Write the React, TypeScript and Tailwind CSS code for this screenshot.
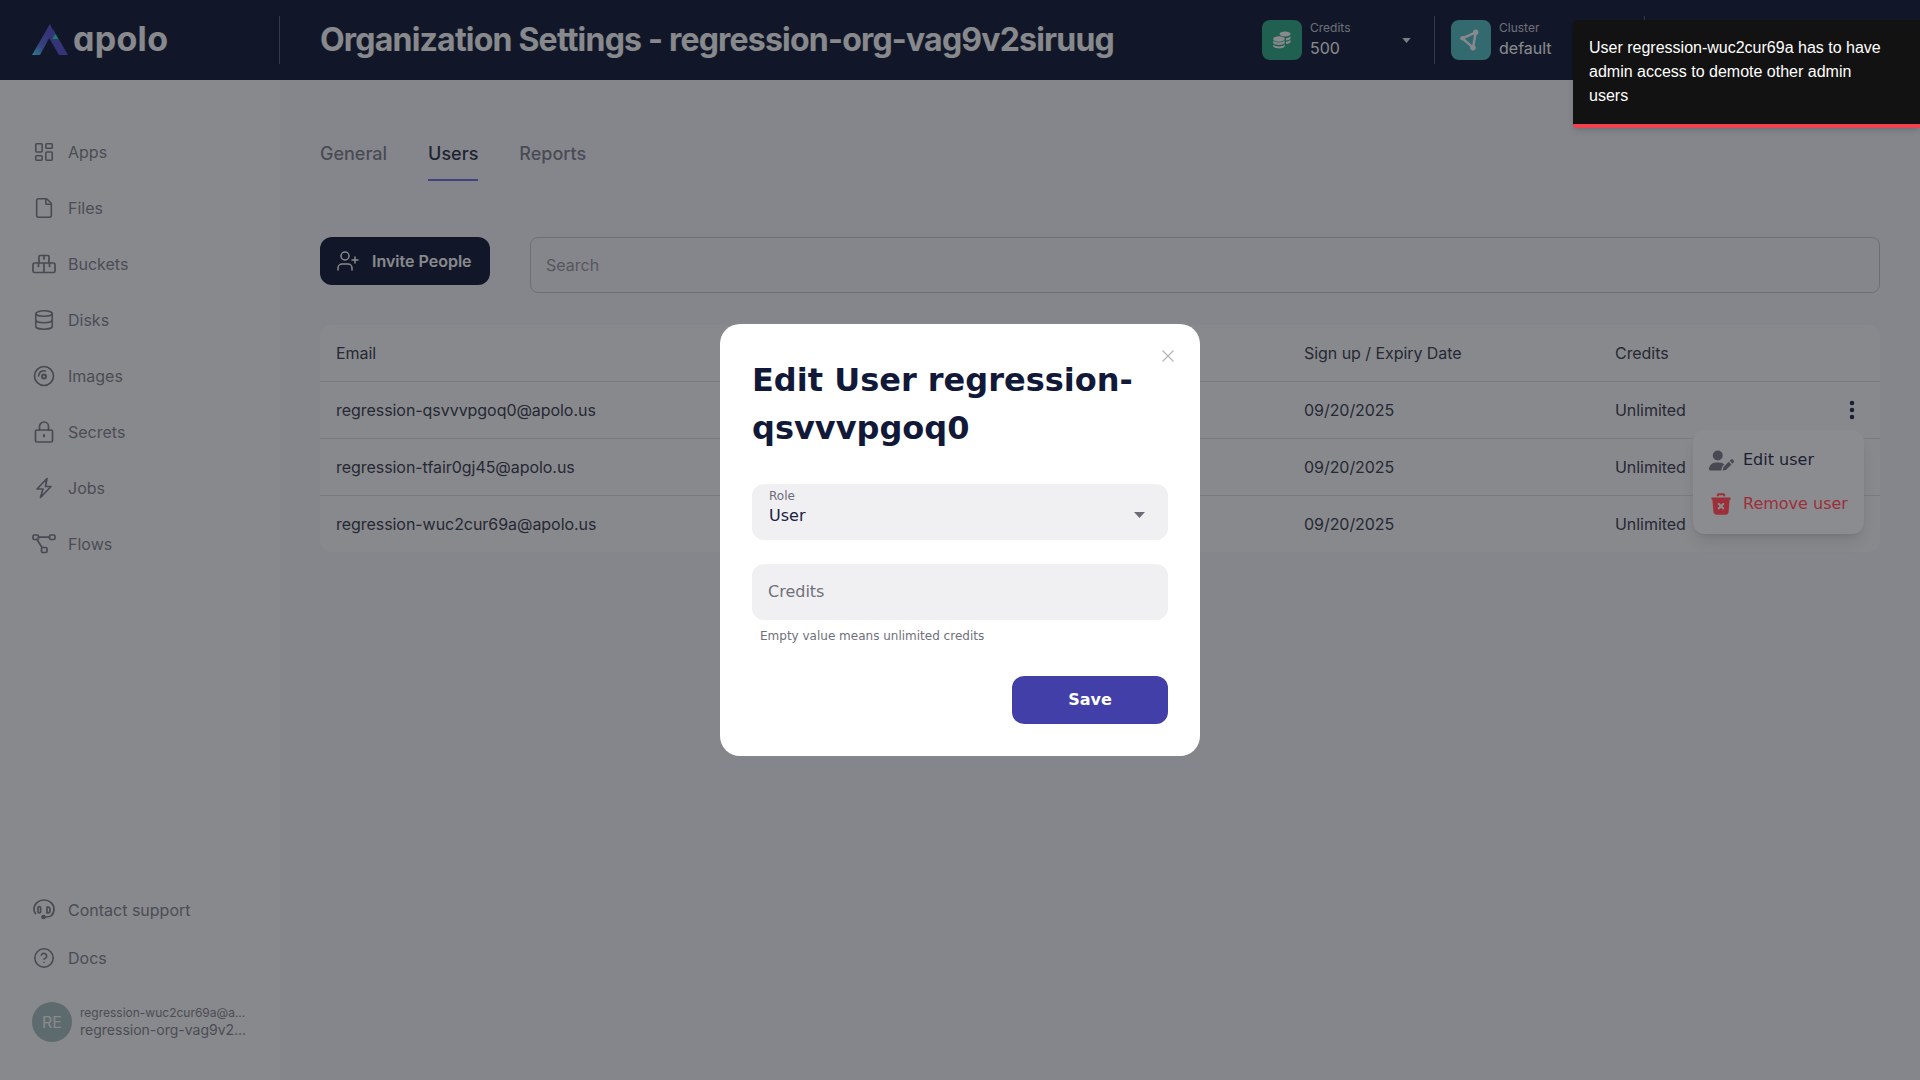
import { LayoutDashboard, File, Database, CircleHelp, UserPlus, EllipsisVertical, X } from "lucide-react";
import { FaUserPen } from "react-icons/fa6";
import { TbTrashXFilled } from "react-icons/tb";
import type { ReactNode } from "react";

const stroke = { fill: "none", stroke: "currentColor", strokeWidth: 2, strokeLinecap: "round" as const, strokeLinejoin: "round" as const };

function Buckets() {
  return (
    <svg width="24" height="24" viewBox="0 0 24 24" {...stroke} strokeWidth={1.7}>
      <path d="M7 10.500V4.500a1 1 0 0 1 1-1h8a1 1 0 0 1 1 1v6" />
      <path d="M12 3.500v3.500" />
      <rect x="1" y="11" width="11" height="9.500" rx="1.500" />
      <path d="M12 20.500h9.500a1.500 1.500 0 0 0 1.500-1.500v-6.500a1.500 1.500 0 0 0-1.500-1.500H12" />
      <path d="M6.500 11v3.500M17.500 11v3.500" />
    </svg>
  );
}

function Disc() {
  return (
    <svg width="22" height="22" viewBox="0 0 22 22" {...stroke} strokeWidth={1.7}>
      <circle cx="11" cy="11" r="9.500" />
      <circle cx="11" cy="11.500" r="2" strokeWidth={2} />
      <path d="M5.500 11a5.500 5.500 0 0 1 7-5" />
    </svg>
  );
}

function Flows() {
  return (
    <svg width="24" height="24" viewBox="0 0 24 24" {...stroke} strokeWidth={1.7}>
      <rect x="1" y="3" width="5.500" height="4.500" rx="1.200" />
      <rect x="17.500" y="3" width="5.500" height="4.500" rx="1.200" />
      <rect x="9.500" y="15.500" width="5.500" height="5" rx="1.200" />
      <path d="M6.500 5.200h11M5 7.500l5 8" />
    </svg>
  );
}

function Headset() {
  return (
    <svg width="22" height="22" viewBox="0 0 22 22" {...stroke} strokeWidth={1.7}>
      <path d="M2.500 14.500C1.400 13.500 1 12 1 10a10 9 0 0 1 20 0c0 3-.8 5-2.500 6.500-1.300 1.200-3 1.500-6 1.500" />
      <rect x="5" y="7.500" width="2.600" height="6.500" rx="1.300" />
      <path d="M14 8h1a2 3 0 0 1 0 6h-1z" />
      <circle cx="10.500" cy="18" r="1.500" fill="currentColor" />
    </svg>
  );
}

function Secret() {
  return (
    <svg width="22" height="22" viewBox="0 0 22 22" {...stroke} strokeWidth={1.7}>
      <rect x="2.500" y="9" width="17" height="12" rx="1.500" />
      <path d="M6.500 9V5.500a4.500 4.500 0 0 1 9 0V9" />
      <path d="M11 14v1.500" strokeWidth={2} />
    </svg>
  );
}

function Bolt() {
  return (
    <svg width="22" height="22" viewBox="0 0 22 22" {...stroke} strokeWidth={1.700}>
      <path d="M14 1.500 4 12h6l-2.500 8.500L18 9.500h-5.500z" />
    </svg>
  );
}

function ClusterIcon() {
  return (
    <svg width="22" height="24" viewBox="0 0 22 24" fill="none" stroke="#ffffff" strokeWidth="2.400" strokeLinejoin="round">
      <path d="M15.700 4.300 2.500 10.300 13 19.700z" />
      <circle cx="15.700" cy="4.300" r="2.700" fill="#ffffff" stroke="none" />
      <circle cx="2.500" cy="10.300" r="2.200" fill="#ffffff" stroke="none" />
      <circle cx="13" cy="19.700" r="2.700" fill="#ffffff" stroke="none" />
    </svg>
  );
}

function Coins() {
  return (
    <svg width="20" height="20" viewBox="0 0 20 20" fill="#ffffff">
      <ellipse cx="13" cy="4" rx="5.500" ry="2.600" />
      <path d="M14 8.200c2-.2 4-1 4.600-2v2c0 1-1.800 2-4.600 2.200zM14 11.800c2-.2 4-1 4.600-2v2c0 1-1.800 2-4.600 2.200z" />
      <ellipse cx="7" cy="9" rx="5.800" ry="2.700" />
      <path d="M1.200 10.500c1 1.300 3.300 2 5.800 2s4.800-.7 5.800-2v2c0 1.300-2.600 2.400-5.800 2.400s-5.800-1.100-5.800-2.400z" />
      <path d="M1.200 14.500c1 1.300 3.300 2 5.800 2s4.800-.7 5.800-2v1.600c0 1.300-2.600 2.400-5.800 2.400s-5.800-1.100-5.800-2.400z" />
    </svg>
  );
}

function Logo() {
  return (
    <div className="flex items-center">
      <svg width="36" height="31" viewBox="0 0 36 31" className="mb-[2px]">
        <defs>
          <linearGradient id="lg" x1="0" y1="1" x2="0.7" y2="0">
            <stop offset="0" stopColor="#3feaff" />
            <stop offset="0.4" stopColor="#5a70e8" />
            <stop offset="0.8" stopColor="#5a55d8" />
          </linearGradient>
        </defs>
        <path d="M18 0 36 31H27L16.500 13 21 5z" fill="#5a55d8" />
        <path d="M18 0 0 31H8L21 7z" fill="url(#lg)" />
        <path d="M23.300 10 26.300 15H20.300z" fill="#14f0b0" />
      </svg>
      <span className="mb-[3px] ml-[5px] text-[34px] font-bold leading-none tracking-[0.300px] text-white [font-feature-settings:'cv11']">apolo</span>
    </div>
  );
}

const nav: [ReactNode, string][] = [
  [<LayoutDashboard size={22} strokeWidth={1.700} />, "Apps"],
  [<File size={22} strokeWidth={1.700} />, "Files"],
  [<Buckets />, "Buckets"],
  [<Database size={22} strokeWidth={1.700} />, "Disks"],
  [<Disc />, "Images"],
  [<Secret />, "Secrets"],
  [<Bolt />, "Jobs"],
  [<Flows />, "Flows"],
];

function NavItem({ icon, label, h }: { icon: ReactNode; label: string; h: string }) {
  return (
    <div className={`flex items-center gap-3 ${h}`}>
      <div className="flex w-6 justify-center text-[#7f7f8c]">{icon}</div>
      <span className="text-base text-[#858592]">{label}</span>
    </div>
  );
}

const rows = ["regression-qsvvvpgoq0@apolo.us", "regression-tfair0gj45@apolo.us", "regression-wuc2cur69a@apolo.us"];

export default function App() {
  return (
    <div className="relative flex h-screen w-screen flex-col overflow-hidden bg-white font-['Inter',sans-serif]">
      <header className="flex h-20 shrink-0 items-center bg-[#111b37]">
        <div className="flex h-12 w-[280px] shrink-0 items-center border-r border-[#555d7b] pl-8">
          <Logo />
        </div>
        <h1 className="flex-1 pl-10 text-[32px] font-bold tracking-[-0.790px] text-white">Organization Settings - regression-org-vag9v2siruug</h1>
        <div className="flex h-12 w-[658px] shrink-0 items-center">
          <div className="flex h-12 w-[173px] items-center border-r border-[#555d7b]">
            <div className="flex h-10 w-10 items-center justify-center rounded-lg bg-[#2dad87]"><Coins /></div>
            <div className="ml-2 flex flex-col">
              <span className="text-xs leading-4 text-[#c6cad8]">Credits</span>
              <span className="text-base leading-6 text-white">500</span>
            </div>
            <svg width="9" height="5" viewBox="0 0 10 6" className="ml-[52px]"><path d="M0 0h10L5 6z" fill="#e8eaf0" /></svg>
          </div>
          <div className="flex h-12 w-[210px] items-center border-r border-[#555d7b] pl-[16px]">
            <div className="flex h-10 w-10 items-center justify-center rounded-lg bg-[#55c1c7]"><ClusterIcon /></div>
            <div className="ml-2 flex flex-col">
              <span className="text-xs leading-4 text-[#c6cad8]">Cluster</span>
              <span className="text-base leading-6 text-white">default</span>
            </div>
          </div>
        </div>
      </header>

      <div className="flex min-h-0 flex-1">
        <aside className="flex w-[280px] shrink-0 flex-col justify-between bg-white pb-[38px] pl-[32px] pt-[44px]">
          <nav className="flex flex-col">
            {nav.map(([icon, label]) => (
              <NavItem key={label} icon={icon} label={label} h="h-14" />
            ))}
          </nav>
          <div className="flex flex-col">
            <NavItem icon={<Headset />} label="Contact support" h="h-12" />
            <NavItem icon={<CircleHelp size={22} strokeWidth={1.700} />} label="Docs" h="h-12" />
            <div className="mt-5 flex items-center gap-2">
              <div className="flex h-10 w-10 shrink-0 items-center justify-center rounded-full bg-[#a9c3c3] text-base text-white">RE</div>
              <div className="flex flex-col whitespace-nowrap text-[#858592]">
                <span className="text-xs leading-4">regression-wuc2cur69a@a...</span>
                <span className="text-sm leading-[18px]">regression-org-vag9v2...</span>
              </div>
            </div>
          </div>
        </aside>

        <main className="flex-1 bg-[#f9f9fc] px-10 pt-[60px]">
          <div className="flex gap-[41px] text-lg font-medium">
            <span className="pb-[11px] text-[#808290]">General</span>
            <span className="border-b-2 border-[#7371eb] pb-[11px] text-[#2d334d]">Users</span>
            <span className="pb-[11px] text-[#808290]">Reports</span>
          </div>

          <div className="mt-14 flex items-start gap-10">
            <button className="flex h-12 w-[170px] shrink-0 items-center rounded-xl bg-[#111b37] pl-[16px] text-base font-semibold text-white">
              <UserPlus size={24} strokeWidth={1.500} />
              <span className="ml-[12px]">Invite People</span>
            </button>
            <div className="flex h-14 flex-1 items-center rounded-lg border border-[#cbcbd1] pl-[15px] text-base text-[#9999a3]">Search</div>
          </div>

          <div className="relative mt-8 rounded-xl bg-white text-base tracking-[-0.050px] text-[#383c50]">
            <div className="grid h-14 grid-cols-[968px_311px_1fr] items-center pl-4">
              <span>Email</span>
              <span>Sign up / Expiry Date</span>
              <span>Credits</span>
            </div>
            {rows.map((email, i) => (
              <div key={email} className="grid h-[57px] grid-cols-[968px_311px_1fr] items-center border-t border-[#e2e3e6] pl-4">
                <span>{email}</span>
                <span>09/20/2025</span>
                <div className="flex items-center justify-between pr-[16px]">
                  <span>Unlimited</span>
                  {i === 0 && <EllipsisVertical size={24} strokeWidth={2.500} className="text-[#1f2444]" />}
                </div>
              </div>
            ))}
          </div>
        </main>
      </div>

      <div className="absolute inset-0 flex items-center justify-center bg-[#111319]/50">
        <div className="relative w-[480px] rounded-[20px] bg-white p-8 font-['DejaVu_Sans',sans-serif]">
          <X size={20} strokeWidth={1.500} className="absolute right-[22px] top-[22px] text-[#b5b6bb]" />
          <h2 className="text-[32px] font-bold leading-[48px] text-[#111838]">Edit User regression-qsvvvpgoq0</h2>
          <div className="relative mt-8 flex h-14 items-end justify-between rounded-xl bg-[#f0f0f3] pb-[14px] pl-[17px] pr-[23px]">
            <span className="absolute left-[17px] top-[5px] text-xs leading-[14px] text-[#6b6c76]">Role</span>
            <span className="text-base leading-5 text-[#1b2140]">User</span>
            <svg width="11" height="6" viewBox="0 0 11 6" className="mb-[8px]"><path d="M0 0h11L5.500 6z" fill="#6b6c76" /></svg>
          </div>
          <div className="mt-6 flex h-14 items-center rounded-xl bg-[#f0f0f3] pl-4 text-base text-[#6f707a]">Credits</div>
          <p className="ml-2 mt-[7px] text-xs leading-[18px] text-[#6f707a]">Empty value means unlimited credits</p>
          <div className="mt-[31px] flex justify-end">
            <button className="h-12 w-[156px] rounded-xl bg-[#4240a8] text-base font-bold text-white">Save</button>
          </div>
        </div>
      </div>

      <div className="absolute left-[1693px] top-[430px] flex h-[104px] w-[171px] flex-col justify-center gap-[14px] rounded-xl bg-[#8b8c8f] font-['DejaVu_Sans',sans-serif] shadow-lg">
        <div className="flex h-[30px] items-center pl-4 text-[#1c1f33]">
          <FaUserPen size={25} className="text-[#484952]" />
          <span className="ml-[9px]">Edit user</span>
        </div>
        <div className="flex h-[30px] items-center pl-4 text-[#9c2f3a]">
          <TbTrashXFilled size={26} className="-ml-[1px]" />
          <span className="ml-[9px]">Remove user</span>
        </div>
      </div>

      <div className="absolute right-0 top-5 h-[108px] w-[347px] rounded-l border-b-4 border-[#ef4150] bg-[#121212] pl-4 pt-[16px] font-['Liberation_Sans',sans-serif] text-base leading-6 text-white shadow-md">
        <p className="w-[300px]">User regression-wuc2cur69a has to have admin access to demote other admin users</p>
      </div>
    </div>
  );
}
